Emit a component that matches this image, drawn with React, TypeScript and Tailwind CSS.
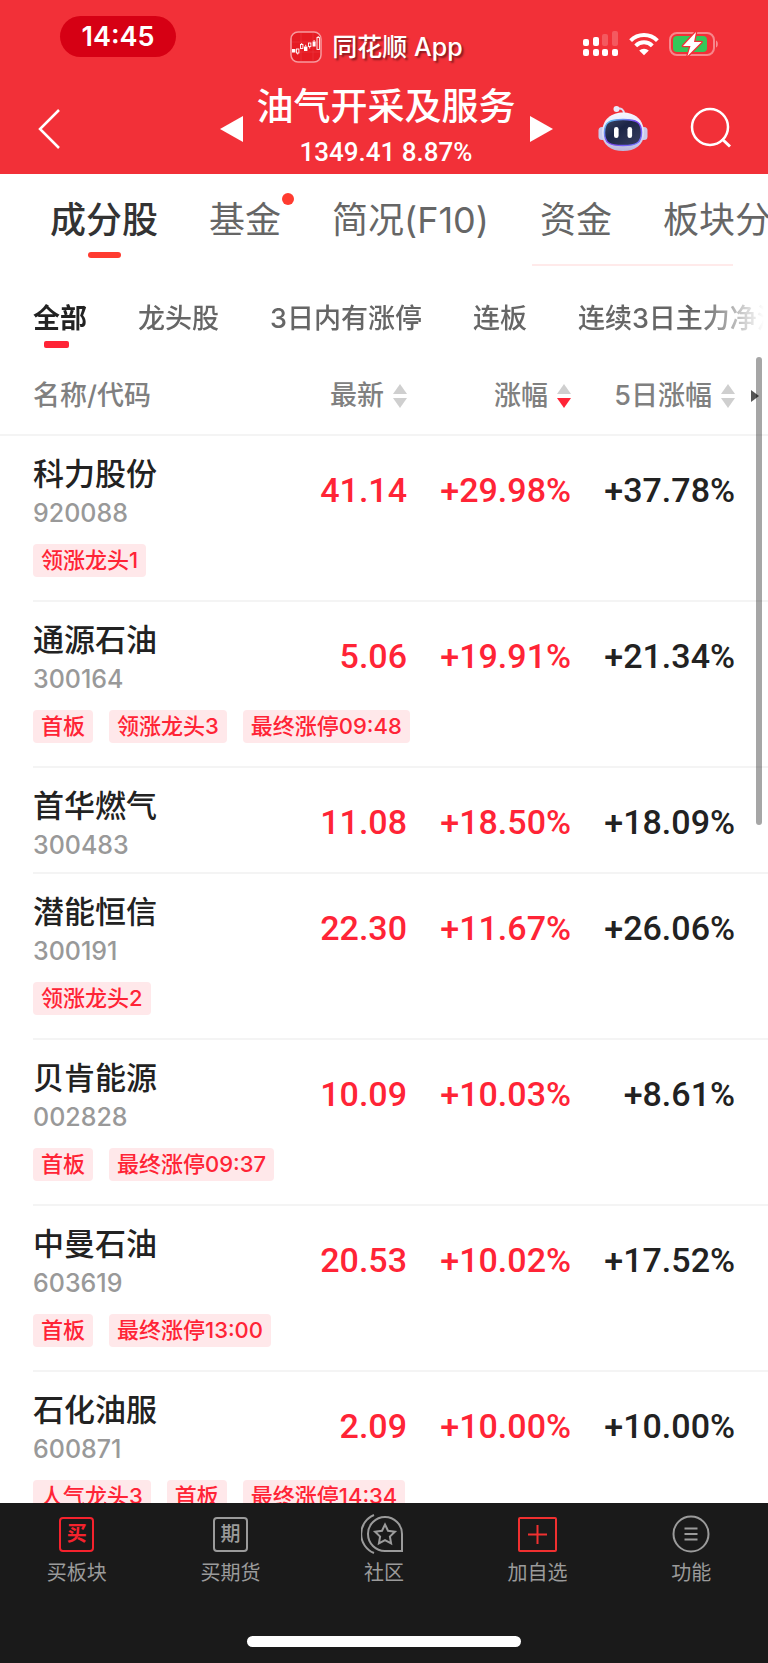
import React from "react";

type Stock = {
  name: string;
  code: string;
  price: string;
  change: string;
  change5d: string;
  tags: string[];
};

type SortState = "none" | "desc";

const TABS = ["成分股", "基金", "简况(F10)", "资金", "板块分析"];

const FILTERS = ["全部", "龙头股", "3日内有涨停", "连板", "连续3日主力净流入"];

const STOCKS: Stock[] = [
  {
    name: "科力股份",
    code: "920088",
    price: "41.14",
    change: "+29.98%",
    change5d: "+37.78%",
    tags: ["领涨龙头1"],
  },
  {
    name: "通源石油",
    code: "300164",
    price: "5.06",
    change: "+19.91%",
    change5d: "+21.34%",
    tags: ["首板", "领涨龙头3", "最终涨停09:48"],
  },
  {
    name: "首华燃气",
    code: "300483",
    price: "11.08",
    change: "+18.50%",
    change5d: "+18.09%",
    tags: [],
  },
  {
    name: "潜能恒信",
    code: "300191",
    price: "22.30",
    change: "+11.67%",
    change5d: "+26.06%",
    tags: ["领涨龙头2"],
  },
  {
    name: "贝肯能源",
    code: "002828",
    price: "10.09",
    change: "+10.03%",
    change5d: "+8.61%",
    tags: ["首板", "最终涨停09:37"],
  },
  {
    name: "中曼石油",
    code: "603619",
    price: "20.53",
    change: "+10.02%",
    change5d: "+17.52%",
    tags: ["首板", "最终涨停13:00"],
  },
  {
    name: "石化油服",
    code: "600871",
    price: "2.09",
    change: "+10.00%",
    change5d: "+10.00%",
    tags: ["人气龙头3", "首板", "最终涨停14:34"],
  },
];

function AppLogo() {
  return (
    <svg width="32" height="32" viewBox="0 0 32 32" fill="none">
      <rect x="1" y="1" width="30" height="30" rx="7" fill="#e51b23" stroke="#f79a9e" strokeWidth="1.5" />
      <path d="M2 11h28M2 21h28M11 2v28M23 2v28" stroke="#ea3a40" strokeWidth="0.6" />
      <g fill="#fff">
        <rect x="2" y="18" width="3.4" height="3.5" />
        <rect x="14" y="15.5" width="3.4" height="4.5" />
        <rect x="22.6" y="10.5" width="3" height="5" />
      </g>
      <g stroke="#fff" strokeWidth="0.9">
        <path d="M7.7 22v1.5M11.7 12v1.5M15.7 13.8v1.7M19.7 15.5v2M24.1 9v1.5M28.2 5v1.5" />
        <rect x="6.5" y="18" width="2.4" height="4" />
        <rect x="10.5" y="13.5" width="2.4" height="4" />
        <rect x="18.5" y="12" width="2.4" height="3.5" />
        <rect x="27" y="6.5" width="2.4" height="12" />
      </g>
    </svg>
  );
}

function SignalIcon() {
  return (
    <svg width="36" height="26" viewBox="0 0 36 26" fill="#fff">
      <rect x="0" y="8" width="6" height="7" rx="2" />
      <rect x="10" y="6" width="6" height="9" rx="2" />
      <rect x="19" y="3" width="6" height="12" rx="2" opacity="0.2" />
      <rect x="29" y="0" width="6" height="15" rx="2" opacity="0.2" />
      <rect x="0" y="18" width="6" height="7" rx="2" />
      <rect x="10" y="18" width="6" height="7" rx="2" />
      <rect x="19" y="18" width="6" height="7" rx="2" />
      <rect x="29" y="18" width="6" height="7" rx="2" />
    </svg>
  );
}

function WifiIcon() {
  return (
    <svg width="30" height="24" viewBox="0 0 30 24" fill="none" stroke="#fff" strokeWidth="4">
      <path d="M1.6 8.6a19 19 0 0 1 26.8 0" />
      <path d="M6.7 13.8a11.7 11.7 0 0 1 16.6 0" />
      <path d="M15 23.2l-4.8-4.6a7 7 0 0 1 9.6 0z" fill="#fff" stroke="none" />
    </svg>
  );
}

function BatteryIcon() {
  return (
    <svg width="50" height="26" viewBox="0 0 50 26" fill="none">
      <rect x="1" y="2" width="44" height="22" rx="7" stroke="#fff" strokeOpacity="0.42" strokeWidth="2" />
      <path d="M47 9.5c2.4.6 2.4 6.4 0 7z" fill="#fff" fillOpacity="0.45" />
      <rect x="4" y="5" width="34" height="16" rx="4" fill="#34c759" />
      <path
        d="M27 1L14 15h7.5L18.500 25 32.500 11H25z"
        fill="#fff"
        stroke="#f23038"
        strokeWidth="2.6"
        strokeLinejoin="round"
        paintOrder="stroke"
      />
    </svg>
  );
}

function RobotIcon() {
  return (
    <svg width="50" height="48" viewBox="0 0 50 48" fill="none">
      <defs>
        <linearGradient id="shell" x1="0" y1="0" x2="0" y2="1">
          <stop offset="0" stopColor="#f6f7ff" />
          <stop offset="0.6" stopColor="#dcdcf4" />
          <stop offset="1" stopColor="#b9b5dc" />
        </linearGradient>
        <linearGradient id="rim" x1="0" y1="0" x2="1" y2="1">
          <stop offset="0" stopColor="#58d5f0" />
          <stop offset="0.5" stopColor="#7a3ff0" />
          <stop offset="1" stopColor="#6f7bff" />
        </linearGradient>
        <linearGradient id="visor" x1="0" y1="0" x2="1" y2="1">
          <stop offset="0" stopColor="#3d4563" />
          <stop offset="0.4" stopColor="#1c2547" />
          <stop offset="1" stopColor="#3a3f60" />
        </linearGradient>
      </defs>
      <path d="M19 4c4-1.500 7 .5 7 5" stroke="#dcdcf4" strokeWidth="2" />
      <circle cx="18.500" cy="4" r="3" fill="#e9eafa" />
      <rect x="0.500" y="22" width="8" height="13" rx="3.500" fill="#c9caeb" />
      <rect x="41.500" y="22" width="8" height="13" rx="3.500" fill="#c9caeb" />
      <path
        d="M25 7.500C36 7.500 46 14 46 28c0 12-9 18-21 18S4 40 4 28C4 14 14 7.500 25 7.500z"
        fill="url(#shell)"
      />
      <path
        d="M25 14.500c14 0 18.500 3 18.500 13S39 40.500 25 40.500 6.500 37.500 6.500 27.500s4.500-13 18.500-13z"
        fill="url(#visor)"
        stroke="url(#rim)"
        strokeWidth="1.500"
      />
      <rect x="16" y="22" width="4.600" height="11" rx="2.300" fill="#fff" />
      <rect x="29.500" y="22" width="4.600" height="11" rx="2.300" fill="#fff" />
    </svg>
  );
}

function SearchIcon() {
  return (
    <svg width="44" height="44" viewBox="0 0 44 44" fill="none" stroke="#fff" strokeWidth="2.500">
      <circle cx="20" cy="20" r="18" />
      <path d="M32 32l8 7.500" strokeWidth="3" />
    </svg>
  );
}

function SortIcon({ state }: { state: SortState }) {
  return (
    <svg width="14" height="24" viewBox="0 0 14 24" className="shrink-0">
      <path d="M7 0l7 10H0z" fill="#cfcfcf" />
      <path d="M7 24L0 14h14z" fill={state === "desc" ? "#ff2436" : "#cfcfcf"} />
    </svg>
  );
}

function SortHeader({ label, state = "none" }: { label: string; state?: SortState }) {
  return (
    <th
      className="h-[88px] border-b-2 border-[#f4f4f4] p-0 pt-[10px] font-medium"
      aria-sort={state === "desc" ? "descending" : "none"}
    >
      <button type="button" className="ml-auto flex items-center gap-[9px] whitespace-nowrap">
        {label}
        <SortIcon state={state} />
      </button>
    </th>
  );
}

function StockRows({ stock }: { stock: Stock }) {
  const hasTags = stock.tags.length > 0;
  const line = hasTags ? "" : "border-b-2 border-[#f4f4f4] pb-2";
  const cell = `p-0 pt-[34px] text-right align-top text-[34px] leading-10 font-medium ${line}`;

  return (
    <tbody className="font-[Roboto]">
      <tr>
        <td />
        <th
          scope="row"
          className={`p-0 pt-[18px] text-left align-top whitespace-nowrap font-[Inter,'Noto_Sans_CJK_SC',sans-serif] ${line}`}
        >
          <div className="text-[31px] leading-10 font-medium text-[#222]">{stock.name}</div>
          <div className="text-[25px] leading-[38px] font-medium text-[#999]">{stock.code}</div>
        </th>
        <td className={`text-[#ff2436] ${cell}`}>{stock.price}</td>
        <td className={`text-[#ff2436] ${cell}`}>{stock.change}</td>
        <td className={`text-[#222] ${cell}`}>{stock.change5d}</td>
        <td className={line} />
      </tr>
      {hasTags && (
        <tr>
          <td />
          <td
            colSpan={5}
            className="border-b-2 border-[#f4f4f4] p-0 pt-3 pb-[23px] font-[Inter,'Noto_Sans_CJK_SC',sans-serif]"
          >
            <div className="flex gap-4">
              {stock.tags.map((tag) => (
                <span
                  key={tag}
                  className="rounded bg-[#ffe8ea] px-2 text-[22px] leading-[33px] font-medium whitespace-nowrap text-[#ff2436]"
                >
                  {tag}
                </span>
              ))}
            </div>
          </td>
        </tr>
      )}
    </tbody>
  );
}

function NavItem({ label, children }: { label: string; children: React.ReactNode }) {
  return (
    <button type="button" className="flex flex-1 flex-col items-center gap-1 pt-3">
      <span className="flex h-[38px] items-center">{children}</span>
      <span className="text-xl leading-8 text-[#9b9b9b]">{label}</span>
    </button>
  );
}

export default function App() {
  return (
    <div className="flex h-screen flex-col overflow-hidden bg-white font-[Inter,'Noto_Sans_CJK_SC',sans-serif]">
      <header className="shrink-0 bg-[#f23038] text-white">
        <div className="flex h-[84px] items-start justify-between pt-4 pr-[49px] pl-[60px]">
          <div className="flex h-[41px] w-[116px] items-center justify-center rounded-full bg-[#d60014] pt-[2px] text-[27px] font-semibold">
            14:45
          </div>
          <div className="mt-[15px] mr-[6px] flex items-center gap-[10px]">
            <AppLogo />
            <span className="text-[25px] leading-8 font-medium [text-shadow:2px_2px_2px_rgba(0,0,0,0.45)]">
              同花顺 App
            </span>
          </div>
          <div className="mt-[15px] flex items-center gap-[10px]">
            <SignalIcon />
            <WifiIcon />
            <BatteryIcon />
          </div>
        </div>

        <div className="grid grid-cols-[1fr_auto_1fr] items-center pr-[34px] pl-[38px]">
          <button type="button" aria-label="返回" className="justify-self-start">
            <svg width="22" height="40" viewBox="0 0 22 40" fill="none" stroke="#fff" strokeWidth="2.500">
              <path d="M21 1L2 20l19 19" />
            </svg>
          </button>

          <div className="flex items-center gap-[14px]">
            <button type="button" aria-label="上一个板块">
              <svg width="23" height="26" viewBox="0 0 23 26" fill="#fff">
                <path d="M0 13L23 0v26z" />
              </svg>
            </button>
            <div className="text-center">
              <h1 className="text-[37px] leading-[46px] font-medium whitespace-nowrap">油气开采及服务</h1>
              <p className="font-[Roboto] text-[26px] leading-[44px] font-medium">1349.41 8.87%</p>
            </div>
            <button type="button" aria-label="下一个板块">
              <svg width="23" height="26" viewBox="0 0 23 26" fill="#fff">
                <path d="M23 13L0 0v26z" />
              </svg>
            </button>
          </div>

          <div className="flex items-center gap-[42px] justify-self-end">
            <button type="button" aria-label="智能助手">
              <RobotIcon />
            </button>
            <button type="button" aria-label="搜索">
              <SearchIcon />
            </button>
          </div>
        </div>
      </header>

      <nav className="flex shrink-0 gap-[51px] overflow-hidden pt-[22px] pl-[50px]">
        {TABS.map((tab, idx) => (
          <button
            key={tab}
            type="button"
            className={`relative flex h-[62px] shrink-0 flex-col items-center gap-2 text-[36px] leading-[48px] ${
              idx === 0 ? "font-medium text-[#333]" : "font-normal text-[#666]"
            }`}
          >
            {tab}
            {idx === 0 && <span className="h-[6px] w-[33px] rounded-full bg-[#ff3b30]" />}
            {tab === "基金" && (
              <span className="absolute -top-[3px] -right-[13px] size-3 rounded-full bg-[#ff3b30]" />
            )}
          </button>
        ))}
      </nav>
      <div className="mt-[6px] mr-[35px] ml-auto h-[2px] w-[201px] shrink-0 bg-[#ffeaea]" />

      <div className="flex shrink-0 gap-[51px] overflow-hidden mask-r-from-[700px] mask-r-to-[764px] pt-[35px] pl-[33px]">
        {FILTERS.map((filter, idx) => (
          <button
            key={filter}
            type="button"
            className={`flex h-[47px] shrink-0 flex-col items-start gap-1 text-[27px] leading-9 whitespace-nowrap ${
              idx === 0 ? "font-bold text-[#222]" : "font-medium text-[#666]"
            }`}
          >
            {filter}
            {idx === 0 && <span className="ml-[11px] h-[7px] w-[25px] shrink-0 rounded-xs bg-[#ff2436]" />}
          </button>
        ))}
      </div>

      <main className="relative min-h-0 flex-1 overflow-hidden">
        <table className="w-full table-fixed border-separate border-spacing-0">
          <colgroup>
            <col className="w-[33px]" />
            <col />
            <col className="w-[122px]" />
            <col className="w-[164px]" />
            <col className="w-[164px]" />
            <col className="w-[33px]" />
          </colgroup>
          <thead className="text-[27px] leading-9 text-[#808080]">
            <tr>
              <td className="border-b-2 border-[#f4f4f4]" />
              <th className="border-b-2 border-[#f4f4f4] p-0 pt-[10px] text-left font-medium">名称/代码</th>
              <SortHeader label="最新" />
              <SortHeader label="涨幅" state="desc" />
              <SortHeader label="5日涨幅" />
              <td className="border-b-2 border-[#f4f4f4] p-0 pt-[10px] pl-4">
                <svg width="8" height="12" viewBox="0 0 8 12" fill="#555">
                  <path d="M0 0l8 6-8 6z" />
                </svg>
              </td>
            </tr>
          </thead>
          {STOCKS.map((stock) => (
            <StockRows key={stock.code} stock={stock} />
          ))}
        </table>
        <div className="absolute top-[9px] right-[6px] h-[468px] w-[6px] rounded-full bg-black/35" />
      </main>

      <footer className="flex shrink-0 flex-col items-center bg-[#1a1a1a]">
        <nav className="flex w-full">
          <NavItem label="买板块">
            <span className="flex size-[35px] items-center justify-center rounded border-2 border-[#f5222d] text-xl leading-none font-bold text-[#f5222d]">
              买
            </span>
          </NavItem>
          <NavItem label="买期货">
            <span className="flex size-[35px] items-center justify-center rounded border-2 border-[#9b9b9b] text-xl leading-none font-medium text-[#9b9b9b]">
              期
            </span>
          </NavItem>
          <NavItem label="社区">
            <svg width="46" height="40" viewBox="0 0 46 40" fill="none" stroke="#9b9b9b" strokeWidth="2">
              <path d="M24 3a17 17 0 0 1 17 17v17H24a17 17 0 0 1 0-34z" />
              <path d="M13 1a20.500 20.500 0 0 0 0 38" />
              <path d="M24 10.500l3 6.300 6.900.9-5 4.800 1.200 6.900-6.100-3.300-6.100 3.300 1.200-6.900-5-4.800 6.900-.9z" />
            </svg>
          </NavItem>
          <NavItem label="加自选">
            <svg width="39" height="35" viewBox="0 0 39 35" fill="none" stroke="#f03030" strokeWidth="2">
              <rect x="1" y="1" width="37" height="33" rx="1" />
              <path d="M10 17.500h19M19.500 8v19" />
            </svg>
          </NavItem>
          <NavItem label="功能">
            <svg width="38" height="38" viewBox="0 0 38 38" fill="none" stroke="#9b9b9b" strokeWidth="2">
              <circle cx="19" cy="19" r="17.500" />
              <path d="M12.500 13.500h13M12.500 19h13M12.500 24.500h13" />
            </svg>
          </NavItem>
        </nav>
        <div className="mt-[47px] mb-4 h-[11px] w-[274px] rounded-full bg-white" />
      </footer>
    </div>
  );
}
